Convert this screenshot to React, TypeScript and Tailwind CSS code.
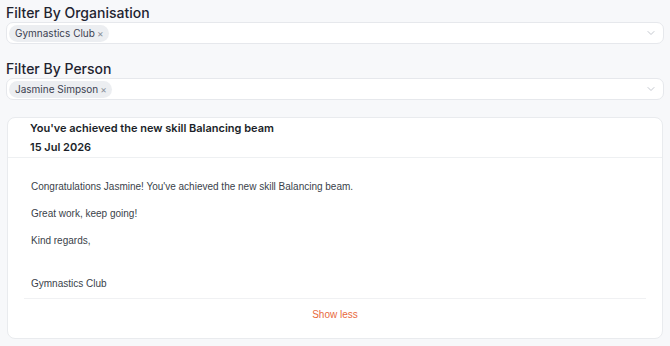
import React from "react";

const head = { fontFamily: "Inter, 'Noto Sans', sans-serif" };
const body = { fontFamily: "'Liberation Sans', Arial, sans-serif" };

function Chevron() {
  return (
    <svg width="10" height="10" viewBox="0 0 10 10" fill="none">
      <path d="M2 3.5 L5 6.5 L8 3.5" stroke="#c4c8cf" strokeWidth="1" strokeLinecap="round" strokeLinejoin="round" />
    </svg>
  );
}

function Select({ label, chip }: { label: string; chip: string }) {
  return (
    <div className="flex flex-col">
      <div className="text-[14px] font-medium text-[#1f2430] leading-[17px] pt-[4px] pb-[1px]" style={head}>
        {label}
      </div>
      <div className="h-[22px] flex items-center justify-between bg-white border border-[#e6e8ec] rounded-[7px] pl-[2px] pr-[7px]">
        <span className="flex items-center gap-[2px] bg-[#eceef1] rounded-full h-[17px] pl-[6px] pr-[5px] text-[10px] text-[#3b4150]" style={head}>
          {chip}
          <span className="text-[10px] text-[#8a8f99] leading-none">×</span>
        </span>
        <Chevron />
      </div>
    </div>
  );
}

export default function App() {
  return (
    <div className="w-[670px] h-[346px] bg-[#f7f8fa] px-[6px] overflow-hidden">
      <Select label="Filter By Organisation" chip="Gymnastics Club" />
      <div className="h-[12px]" />
      <Select label="Filter By Person" chip="Jasmine Simpson" />
      <div className="h-[17px]" />
      <div className="ml-[1px] mr-[1px] bg-white border border-[#e9ebee] rounded-[8px] h-[222px] flex flex-col">
        <div className="pl-[22px] pt-[1px] border-b border-[#eef0f2] text-[#1b1f29] font-semibold text-[11px]" style={head}>
          <div className="leading-[19px]">You've achieved the new skill Balancing beam</div>
          <div className="leading-[19px]">15 Jul 2026</div>
        </div>
        <div className="pl-[23px] pt-[22px] text-[10px] text-[#3a3f4a] leading-[13px]" style={body}>
          <p>Congratulations Jasmine! You've achieved the new skill Balancing beam.</p>
          <p className="mt-[14px]">Great work, keep going!</p>
          <p className="mt-[14px]">Kind regards,</p>
          <p className="mt-[30px]">Gymnastics Club</p>
        </div>
        <div className="mx-[16px] mt-[8px] border-t border-[#f0f1f3]" />
        <div className="text-center text-[10px] text-[#e8693c] pt-[9px] leading-[13px]" style={body}>
          Show less
        </div>
      </div>
    </div>
  );
}
